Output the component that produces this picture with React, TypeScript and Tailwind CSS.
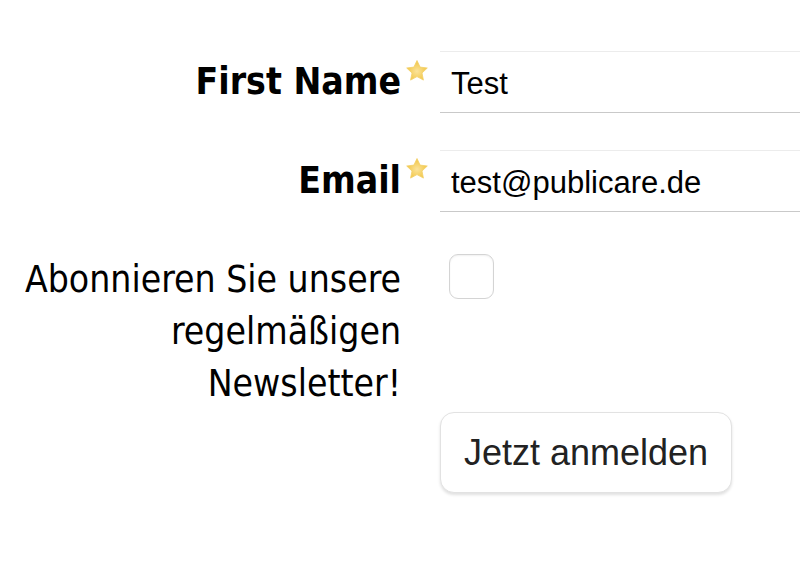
import { useState } from "react"

const Star = () => (
  <svg width="24" height="24" viewBox="0 0 24 24" className="shrink-0">
    <defs>
      <radialGradient id="starFill" cx="50%" cy="55%" r="55%">
        <stop offset="0%" stopColor="#fbe39a" />
        <stop offset="100%" stopColor="#f1c440" />
      </radialGradient>
    </defs>
    <path
      d="M12 1.5l3.1 6.6 7.2.9-5.3 5 1.4 7.1L12 17.6l-6.4 3.5 1.4-7.1-5.3-5 7.2-.9z"
      fill="url(#starFill)"
      stroke="#f3d06a"
      strokeWidth="0.8"
      strokeLinejoin="round"
    />
  </svg>
)

const labelFont = { fontFamily: '"DejaVu Sans Condensed", "DejaVu Sans", sans-serif' }
const fieldFont = { fontFamily: '"Liberation Sans", Arial, sans-serif' }

export default function App() {
  const [name, setName] = useState("Test")
  const [email, setEmail] = useState("test@publicare.de")
  const [subscribe, setSubscribe] = useState(false)

  return (
    <div className="w-[800px] h-[576px] bg-white overflow-hidden">
      <form className="pt-[51px]" onSubmit={(e) => e.preventDefault()}>
        <div className="flex items-center h-[62px]">
          <label
            className="w-[401px] shrink-0 text-right text-[37px] font-bold text-black font-stretch-condensed"
            style={labelFont}
          >
            First Name
          </label>
          <div className="w-[39px] shrink-0 self-start pt-[8px] pl-[4px]">
            <Star />
          </div>
          <input
            value={name}
            onChange={(e) => setName(e.target.value)}
            className="h-[62px] flex-1 min-w-0 bg-white border-t border-b border-t-[#ececec] border-b-[#c9c9c9] pl-[11px] pt-[4px] text-[31px] text-black outline-none"
            style={fieldFont}
          />
        </div>

        <div className="flex items-center h-[62px] mt-[37px]">
          <label
            className="w-[401px] shrink-0 text-right text-[37px] font-bold text-black font-stretch-condensed"
            style={labelFont}
          >
            Email
          </label>
          <div className="w-[39px] shrink-0 self-start pt-[7px] pl-[4px]">
            <Star />
          </div>
          <input
            value={email}
            onChange={(e) => setEmail(e.target.value)}
            className="h-[62px] flex-1 min-w-0 bg-white border-t border-b border-t-[#ececec] border-b-[#c9c9c9] pl-[11px] pt-[4px] text-[31px] text-black outline-none"
            style={fieldFont}
          />
        </div>

        <div className="flex items-start mt-[42px]">
          <label
            className="w-[401px] shrink-0 text-right text-[37px] leading-[52px] text-black font-stretch-condensed"
            style={labelFont}
          >
            Abonnieren Sie unsere regelmäßigen Newsletter!
          </label>
          <div className="w-[48px] shrink-0" />
          <button
            type="button"
            onClick={() => setSubscribe(!subscribe)}
            className="w-[45px] h-[45px] rounded-[9px] border border-[#d4d4d4] bg-white shadow-[inset_0_1px_2px_rgba(0,0,0,0.06)]"
            aria-checked={subscribe}
          />
        </div>

        <div className="pl-[440px] mt-[2px]">
          <button
            type="submit"
            className="h-[81px] px-[23px] rounded-[14px] border border-[#e2e2e2] bg-white text-[36px] text-[#222] shadow-[0_2px_3px_rgba(0,0,0,0.12)]"
            style={fieldFont}
          >
            Jetzt anmelden
          </button>
        </div>
      </form>
    </div>
  )
}
